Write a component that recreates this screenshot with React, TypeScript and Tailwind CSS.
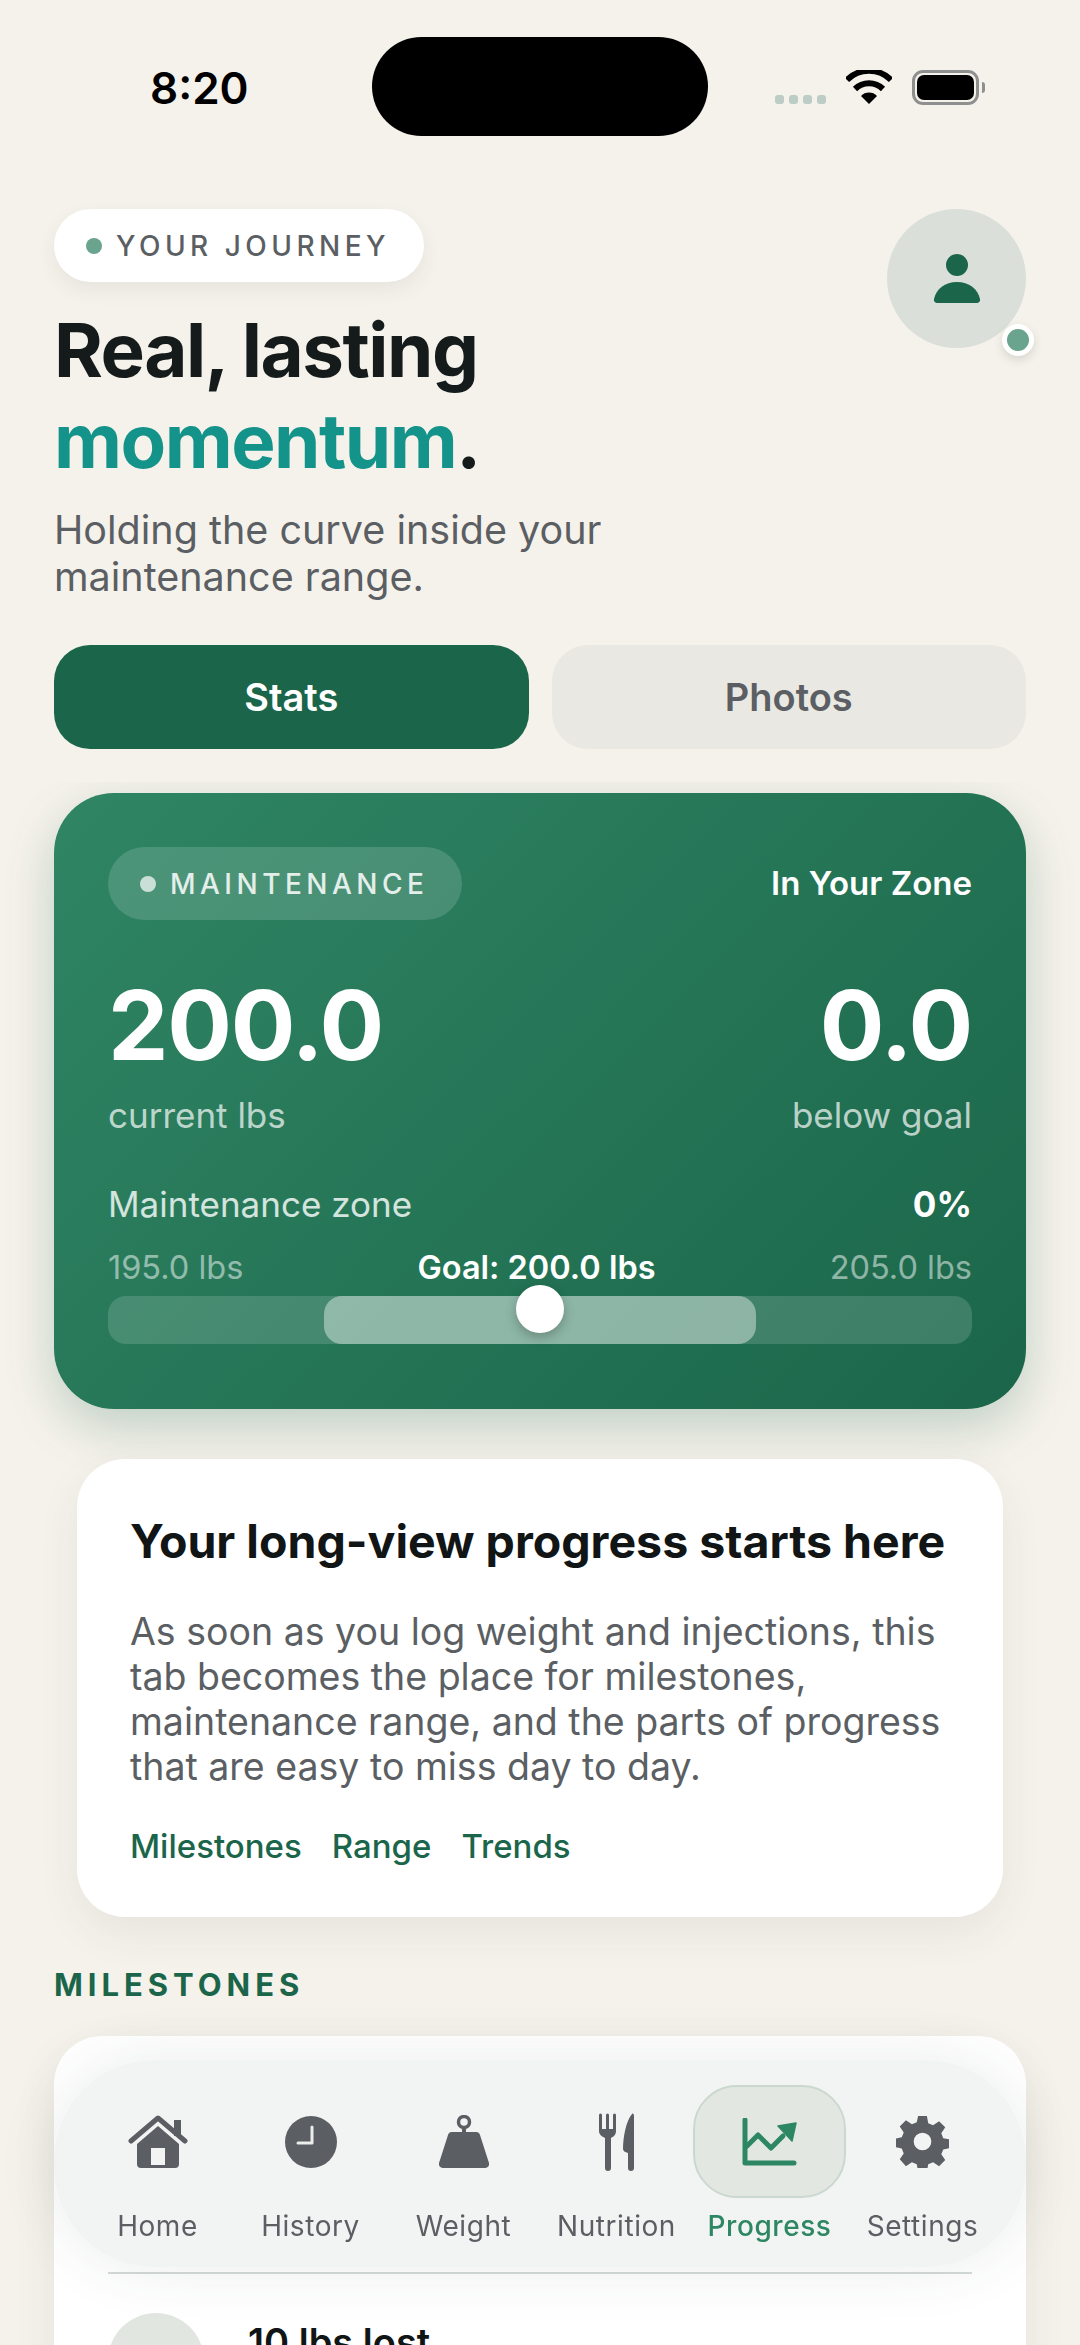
import type { ReactNode } from "react";

const FONT = "font-['Inter','Liberation_Sans',sans-serif]";

function HomeIcon() {
  return (
    <svg width="60" height="53" viewBox="0 0 60 53" fill="#5B5F63">
      <path d="M46 5h7v16h-7z" />
      <path d="M3 26 30 3l27 23" fill="none" stroke="#5B5F63" strokeWidth="5" strokeLinecap="round" strokeLinejoin="round" />
      <path fillRule="evenodd" d="M9 29 30 11l21 18v20a4 4 0 0 1-4 4H13a4 4 0 0 1-4-4V29Zm14 4v17h14V33H23Z" />
    </svg>
  );
}

function ClockIcon() {
  return (
    <svg width="52" height="52" viewBox="0 0 52 52">
      <circle cx="26" cy="26" r="26" fill="#5B5F63" />
      <path d="M27 11v16H13" fill="none" stroke="#ECEEEE" strokeWidth="3" strokeLinecap="round" strokeLinejoin="round" />
    </svg>
  );
}

function WeightIcon() {
  return (
    <svg width="50" height="53" viewBox="0 0 50 53" fill="#5B5F63">
      <circle cx="25" cy="7" r="5.500" fill="none" stroke="#5B5F63" strokeWidth="3.500" />
      <path d="M23 12h4v6h-4z" />
      <path d="M13 17h24a4 4 0 0 1 4 3l9 28a4 4 0 0 1-4 5H4a4 4 0 0 1-4-5l9-28a4 4 0 0 1 4-3Z" />
    </svg>
  );
}

function ForkKnifeIcon() {
  return (
    <svg width="36" height="58" viewBox="0 0 36 58" fill="#5B5F63">
      <path d="M0 2a1.500 1.500 0 0 1 3 0v14h4V2a1.500 1.500 0 0 1 3 0v14h4V2a1.500 1.500 0 0 1 3 0v16c0 4-3 6-5 7v30a3 3 0 0 1-6 0V25c-2-1-6-3-6-7V2Z" />
      <path d="M35 3v52a3 3 0 0 1-6 0V40c-3-1-5-2-5-4 0-12 3-28 9-35 1-1 2 0 2 2Z" />
    </svg>
  );
}

function ChartIcon() {
  return (
    <svg width="55" height="48" viewBox="0 0 55 48" fill="none">
      <path d="M3 2v43h49" stroke="#2D8763" strokeWidth="5" strokeLinecap="round" strokeLinejoin="round" />
      <path d="M5 28 16 17l13 13 12-12" stroke="#2D8763" strokeWidth="5" strokeLinecap="round" strokeLinejoin="round" />
      <path d="M36 8 54 5l-4 18Z" fill="#2D8763" stroke="#2D8763" strokeWidth="1.500" strokeLinejoin="round" />
    </svg>
  );
}

function GearIcon() {
  return (
    <svg width="53" height="53" viewBox="0 0 24 24" fill="#5B5F63">
      <path fillRule="evenodd" d="M10 .5h4l.6 3.200 2.200.9 2.700-1.800 2.800 2.800-1.800 2.700.9 2.200 3.100.6v3.800l-3.100.7-.9 2.200 1.800 2.600-2.800 2.800-2.700-1.800-2.200.9-.6 3.200h-4l-.6-3.200-2.200-.9-2.700 1.800L1.700 20l1.800-2.600-.9-2.200L-.5 14.500v-3.800l3.100-.6.9-2.200-1.800-2.700 2.800-2.800 2.700 1.800 2.200-.9L10 .5ZM12 8a4 4 0 1 0 0 8 4 4 0 0 0 0-8Z" />
    </svg>
  );
}

function PersonIcon() {
  return (
    <svg width="46" height="49" viewBox="0 0 46 49" fill="#1B664A">
      <circle cx="23" cy="11" r="11" />
      <path d="M0 45c2-10 11-17 23-17s21 7 23 17c.4 2.500-1 4-3 4H3c-2 0-3.400-1.500-3-4Z" />
    </svg>
  );
}

function StatusBar() {
  return (
    <div className="relative h-[136px] shrink-0">
      <span className="absolute left-[150px] top-[60px] text-[44px] leading-[56px] font-semibold text-black">8:20</span>
      <div className="absolute left-[372px] top-[37px] h-[99px] w-[336px] rounded-[50px] bg-black" />
      <div className="absolute left-[775px] top-[95px] flex gap-[5px]">
        <span className="h-[9px] w-[9px] rounded-[3px] bg-[#BCCCC6]" />
        <span className="h-[9px] w-[9px] rounded-[3px] bg-[#BCCCC6]" />
        <span className="h-[9px] w-[9px] rounded-[3px] bg-[#BCCCC6]" />
        <span className="h-[9px] w-[9px] rounded-[3px] bg-[#BCCCC6]" />
      </div>
      <svg className="absolute left-[846px] top-[70px]" width="46" height="34" viewBox="0 0 46 34">
        <path d="M23 34 15 26a11 11 0 0 1 16 0L23 34Z" fill="#000" />
        <path d="M9 19a20 20 0 0 1 28 0M1 10a31 31 0 0 1 44 0" fill="none" stroke="#000" strokeWidth="6" />
      </svg>
      <div className="absolute left-[912px] top-[70px] flex items-center">
        <div className="h-[35px] w-[67px] rounded-[11px] border-[3px] border-[#8E9090] p-[2px]">
          <div className="h-full w-full rounded-[7px] bg-black" />
        </div>
        <span className="ml-[3px] h-[11px] w-[3px] rounded-r-full bg-[#8E9090]" />
      </div>
    </div>
  );
}

function Header() {
  return (
    <div className="relative shrink-0 px-[54px] pt-[73px]">
      <div className="inline-flex h-[73px] items-center gap-[14px] rounded-full bg-white pl-[32px] pr-[34px] shadow-[0_8px_20px_rgba(40,60,50,0.07)]">
        <span className="h-[16px] w-[16px] rounded-full bg-[#6AA48F]" />
        <span className="text-[28px] font-medium tracking-[0.16em] text-[#5B5F63]">YOUR JOURNEY</span>
      </div>
      <h1 className="mt-[23px] text-[74.5px] leading-[91px] font-bold tracking-[-0.02em] text-[#151B1B]">
        Real, lasting
        <br />
        <span className="text-[#13938A]">momentum</span>.
      </h1>
      <p className="mt-[20px] text-[39.5px] leading-[47px] text-[#5B5F63]">
        Holding the curve inside your
        <br />
        maintenance range.
      </p>
      <div className="absolute right-[54px] top-[73px] flex h-[139px] w-[139px] items-center justify-center rounded-full bg-[#DAE0D9]">
        <PersonIcon />
        <span className="absolute -bottom-[8px] -right-[8px] h-[32px] w-[32px] rounded-full border-[5px] border-white bg-[#6AA48F] shadow-[0_4px_10px_rgba(40,60,50,0.15)]" />
      </div>
    </div>
  );
}

function Tabs() {
  return (
    <div className="mt-[44px] flex shrink-0 gap-[23px] px-[54px]">
      <button className="h-[104px] flex-1 rounded-[36px] bg-[#1B664A] text-[38px] font-semibold text-white">Stats</button>
      <button className="h-[104px] flex-1 rounded-[36px] bg-[#E9E8E3] text-[38px] font-semibold text-[#5B5F63]">Photos</button>
    </div>
  );
}

function MaintenanceCard() {
  return (
    <section className="rounded-[60px] bg-[linear-gradient(135deg,#2F8564_0%,#1B664A_100%)] px-[54px] pb-[65px] pt-[54px] shadow-[0_18px_50px_rgba(27,102,74,0.24)]">
      <div className="flex items-center justify-between">
        <div className="flex h-[73px] items-center gap-[14px] rounded-full bg-white/15 pl-[32px] pr-[34px]">
          <span className="h-[16px] w-[16px] rounded-full bg-white/70" />
          <span className="text-[28px] font-medium tracking-[0.16em] text-white/85">MAINTENANCE</span>
        </div>
        <span className="text-[33px] font-semibold text-white">In Your Zone</span>
      </div>
      <div className="mt-[47px] flex items-end justify-between">
        <div>
          <div className="text-[96px] leading-[116px] font-bold tracking-[-0.0125em] text-white">200.0</div>
          <div className="mt-[10px] text-[35px] leading-[44px] text-white/70">current lbs</div>
        </div>
        <div className="text-right">
          <div className="text-[96px] leading-[116px] font-bold tracking-[-0.0125em] text-white">0.0</div>
          <div className="mt-[10px] text-[35px] leading-[44px] text-white/70">below goal</div>
        </div>
      </div>
      <div className="mt-[45px] flex items-center justify-between text-[35px] leading-[44px]">
        <span className="text-white/80">Maintenance zone</span>
        <span className="font-bold text-white">0%</span>
      </div>
      <div className="mt-[22px] flex items-center justify-between text-[32.5px] leading-[40px]">
        <span className="text-white/50">195.0 lbs</span>
        <span className="font-semibold text-white">Goal: 200.0 lbs</span>
        <span className="text-white/50">205.0 lbs</span>
      </div>
      <div className="relative mt-[8px] h-[48px] rounded-[18px] bg-white/15">
        <div className="absolute inset-y-0 left-1/4 w-1/2 rounded-[18px] bg-white/40" />
        <span className="absolute left-1/2 top-[-11px] h-[48px] w-[48px] -translate-x-1/2 rounded-full bg-white shadow-[0_4px_12px_rgba(0,0,0,0.25)]" />
      </div>
    </section>
  );
}

function EmptyCard() {
  return (
    <section className="mx-[23px] mt-[50px] rounded-[48px] bg-white px-[53px] pb-[49px] pt-[54px] shadow-[0_16px_44px_rgba(40,60,50,0.07)]">
      <h2 className="text-[46.5px] leading-[56px] font-bold whitespace-nowrap text-[#111515]">Your long-view progress starts here</h2>
      <p className="mt-[40px] text-[37.5px] leading-[45px] text-[#5B5F63]">
        As soon as you log weight and injections, this tab becomes the place for milestones, maintenance range, and the parts of progress that are easy to miss day to day.
      </p>
      <div className="mt-[35px] flex gap-[30px] text-[33px] leading-[44px] font-medium text-[#1B664A]">
        <span>Milestones</span>
        <span>Range</span>
        <span>Trends</span>
      </div>
    </section>
  );
}

function Milestones() {
  return (
    <>
      <h3 className="mt-[48px] text-[31px] leading-[40px] font-bold tracking-[0.16em] text-[#1B664A]">MILESTONES</h3>
      <section className="mt-[31px] rounded-[48px] bg-white px-[54px] shadow-[0_16px_44px_rgba(40,60,50,0.08)]">
        <div className="h-[238px] border-b-2 border-[#D5DBD7]" />
        <div className="flex gap-[44px] pt-[39px]">
          <div className="h-[96px] w-[96px] shrink-0 rounded-full bg-[#E2E6E1]" />
          <div className="mt-[6px] text-[38px] leading-[46px] font-semibold text-[#111515]">10 lbs lost</div>
        </div>
      </section>
    </>
  );
}

type NavItemProps = {
  label: string;
  icon: ReactNode;
  active?: boolean;
};

function NavItem({ label, icon, active }: NavItemProps) {
  return (
    <div className="flex flex-col items-center">
      <div
        className={`flex h-[113px] w-full items-center justify-center rounded-[44px] border-2 ${
          active ? "border-[#CBD8CF] bg-[#E2E7E1]" : "border-transparent"
        }`}
      >
        {icon}
      </div>
      <span className={`mt-[10px] text-[28px] leading-[36px] tracking-[0.02em] ${active ? "font-medium text-[#2D8763]" : "text-[#5B5F63]"}`}>{label}</span>
    </div>
  );
}

function BottomNav() {
  return (
    <nav className="absolute left-[54px] top-[2060px] grid h-[207px] w-[972px] grid-cols-6 rounded-[100px] bg-[#F1F2F2]/90 px-[27px] pt-[25px] shadow-[0_0_60px_rgba(50,65,58,0.10)] backdrop-blur-md">
      <NavItem label="Home" icon={<HomeIcon />} />
      <NavItem label="History" icon={<ClockIcon />} />
      <NavItem label="Weight" icon={<WeightIcon />} />
      <NavItem label="Nutrition" icon={<ForkKnifeIcon />} />
      <NavItem label="Progress" icon={<ChartIcon />} active />
      <NavItem label="Settings" icon={<GearIcon />} />
    </nav>
  );
}

export default function App() {
  return (
    <div className={`relative flex h-[2345px] w-[1080px] flex-col overflow-hidden bg-[#F5F2EB] ${FONT}`}>
      <StatusBar />
      <Header />
      <Tabs />
      <main className="mt-[33px] min-h-0 flex-1 overflow-hidden px-[54px] pt-[11px]">
        <MaintenanceCard />
        <EmptyCard />
        <Milestones />
      </main>
      <BottomNav />
    </div>
  );
}
